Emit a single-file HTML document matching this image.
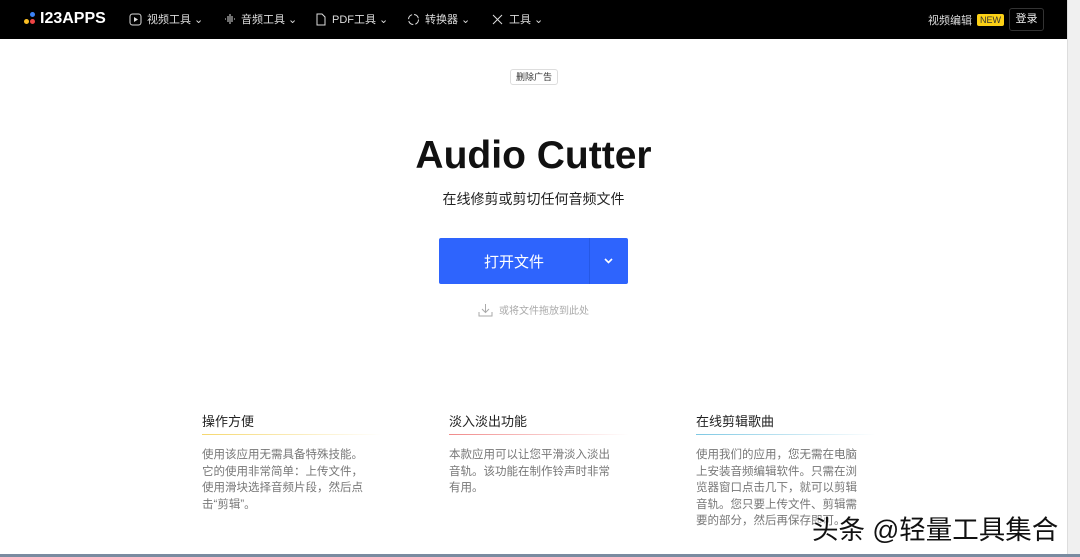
<!DOCTYPE html>
<html><head><meta charset="utf-8"><style>
*{margin:0;padding:0;box-sizing:border-box}
body{width:1080px;height:557px;overflow:hidden;background:#fff;font-family:"Liberation Sans","Noto Sans CJK SC",sans-serif;position:relative}
.nav{position:absolute;left:0;top:0;width:1067px;height:39px;background:#000;color:#ddd;font-size:11px}
.nav .it{position:absolute;top:11px;display:flex;align-items:center;gap:5px;white-space:nowrap}
.logo{position:absolute;left:23px;top:10px;font-weight:bold;font-size:16px;color:#fff;letter-spacing:0}
.dot{position:absolute;width:5px;height:5px;border-radius:50%}
.sb{position:absolute;right:0;top:0;width:13px;height:557px;background:#f0f0f0;border-left:1px solid #ddd}
.ad{position:absolute;left:510px;top:69px;width:48px;height:16px;border:1px solid #ddd;border-radius:3px;font-size:9px;color:#333;text-align:center;line-height:14px}
h1{position:absolute;left:0;width:1067px;top:134px;text-align:center;font-size:39px;font-weight:bold;color:#111}
.sub{position:absolute;left:0;width:1067px;top:189px;text-align:center;font-size:14px;color:#222}
.btn{position:absolute;left:439px;top:238px;width:189px;height:46px;background:#2e64fd;border-radius:2px;color:#fff}
.btn .t{position:absolute;left:0;width:150px;top:13px;text-align:center;font-size:15px}
.btn .d{position:absolute;left:150px;top:0;width:1px;height:46px;background:#2558e6}
.drop{position:absolute;left:478px;top:302px;font-size:10px;color:#aaa;display:flex;gap:6px;align-items:center}
.f{position:absolute;top:411px;width:190px}
.f h3{font-size:13px;font-weight:normal;color:#222;height:23px}
.f .ln{height:1px;width:180px;margin-bottom:12px}
.f p{font-size:11.5px;line-height:16.5px;color:#777}
.wm{position:absolute;left:812px;top:508px;font-size:26.5px;color:#111;text-shadow:0 0 2px #fff,0 0 2px #fff}
.bot{position:absolute;left:0;top:554px;width:1080px;height:3px;background:#7a8ba0}
</style></head><body>
<div class="nav">
 <span class="dot" style="left:30px;top:12px;background:#3b82f6"></span>
 <span class="dot" style="left:24px;top:19px;background:#fbbf24"></span>
 <span class="dot" style="left:30px;top:19px;background:#ef4444"></span>
 <div class="logo" style="left:40px">I23APPS</div>
 <div class="it" style="left:129px"><svg width="13" height="13" viewBox="0 0 13 13"><rect x="1" y="1" width="11" height="11" rx="2.5" fill="none" stroke="#ddd"/><path d="M5 4l4 2.5-4 2.5z" fill="#ddd"/></svg>视频工具 ⌄</div>
 <div class="it" style="left:224px"><svg width="12" height="12"><path d="M1 6h1M4 3v6M6 1v10M8 3v6M10 6h1" stroke="#ddd"/></svg>音频工具 ⌄</div>
 <div class="it" style="left:315px"><svg width="12" height="13"><path d="M2 1h5l3 3v8H2z" fill="none" stroke="#ddd"/></svg>PDF工具 ⌄</div>
 <div class="it" style="left:407px"><svg width="13" height="13"><circle cx="6.5" cy="6.5" r="5" fill="none" stroke="#ddd" stroke-dasharray="6 2"/></svg>转换器 ⌄</div>
 <div class="it" style="left:491px"><svg width="13" height="13"><path d="M2 2l9 9M11 2l-9 9" stroke="#ddd"/></svg>工具 ⌄</div>
 <div class="it" style="left:928px;top:12px">视频编辑 <span style="background:#fcd116;color:#333;font-size:9px;padding:1px 3px;border-radius:2px">NEW</span></div>
 <div style="position:absolute;left:1009px;top:8px;width:35px;height:23px;border:1px solid #333;border-radius:3px;color:#eee;font-size:11px;text-align:center;line-height:21px">登录</div>
</div>
<div class="sb"></div>
<div class="ad">删除广告</div>
<h1>Audio Cutter</h1>
<div class="sub">在线修剪或剪切任何音频文件</div>
<div class="btn"><div class="t">打开文件</div><div class="d"></div><svg style="position:absolute;left:165px;top:20px" width="9" height="6"><path d="M1 1l3.5 3.5L8 1" stroke="#fff" stroke-width="1.6" fill="none"/></svg></div>
<div class="drop"><svg width="15" height="14"><path d="M7.5 1v8M4 6l3.5 3.5L11 6M1 9v4h13V9" stroke="#aaa" fill="none"/></svg>或将文件拖放到此处</div>
<div class="f" style="left:202px;width:170px"><h3>操作方便</h3><div class="ln" style="background:linear-gradient(90deg,#f5d76e,#fff)"></div><p>使用该应用无需具备特殊技能。它的使用非常简单：上传文件，使用滑块选择音频片段，然后点击“剪辑”。</p></div>
<div class="f" style="left:449px;width:170px"><h3>淡入淡出功能</h3><div class="ln" style="background:linear-gradient(90deg,#f08a8a,#fff)"></div><p>本款应用可以让您平滑淡入淡出音轨。该功能在制作铃声时非常有用。</p></div>
<div class="f" style="left:696px;width:168px"><h3>在线剪辑歌曲</h3><div class="ln" style="background:linear-gradient(90deg,#7ec8e3,#fff)"></div><p>使用我们的应用，您无需在电脑上安装音频编辑软件。只需在浏览器窗口点击几下，就可以剪辑音轨。您只要上传文件、剪辑需要的部分，然后再保存即可。</p></div>
<div class="wm">头条 @轻量工具集合</div>
<div class="bot"></div>
</body></html>
